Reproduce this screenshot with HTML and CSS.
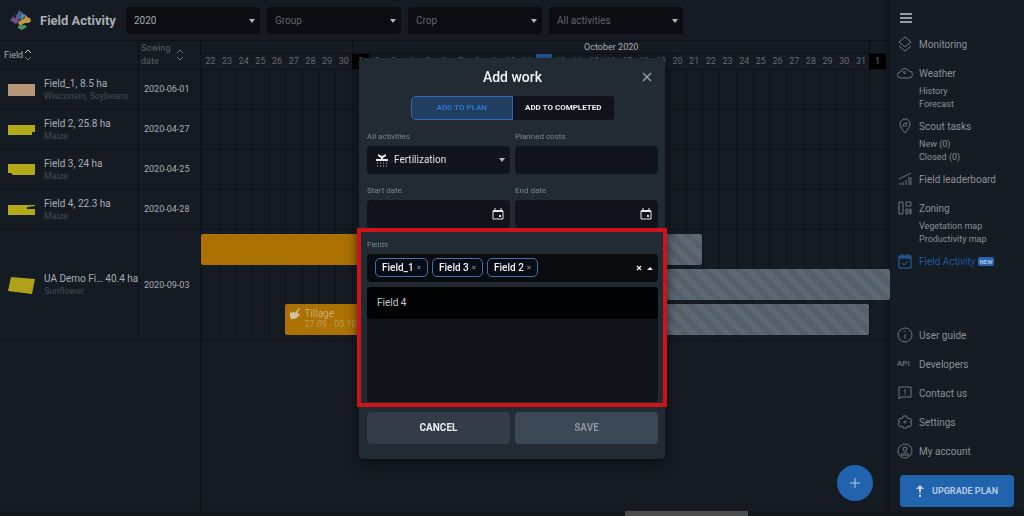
FILE: index.html
```html
<!DOCTYPE html>
<html lang="en">
<head>
    <meta charset="UTF-8">
    <meta name="viewport" content="width=device-width, initial-scale=1.0">
    <title>Field Activity</title>
    <link rel="stylesheet" href="styles.css">
</head>
<body>

    <div class="app">
        <main class="main">

            <!-- Top bar with filters -->
            <header class="topbar">
                <svg class="logo" viewBox="0 0 22 22">
                    <path d="M0 11l4-4v3l3-3 2 5-3 3z" fill="#71528f"/>
                    <path d="M5 5l2 1 2-5 2 2-1 8-3-2z" fill="#4f5f9c"/>
                    <path d="M12 2l1 3 3 1-4 5-2-2z" fill="#5487a0"/>
                    <path d="M8 14c2-3 4-4 6-4l2-4 1 2 3 1 1 3c-1 2-3 2-6 2l-5 3z" fill="#b99a45"/>
                    <path d="M8 17l7-1 2 2-5 3-4-2z" fill="#4f9468"/>
                </svg>
                <h1>Field Activity</h1>
                <div class="filters">
                    <div class="select">
                        <select class="chosen" aria-label="Year"><option>2020</option></select>
                    </div>
                    <div class="select">
                        <select aria-label="Group"><option>Group</option></select>
                    </div>
                    <div class="select">
                        <select aria-label="Crop"><option>Crop</option></select>
                    </div>
                    <div class="select">
                        <select aria-label="All activities"><option>All activities</option></select>
                    </div>
                </div>
            </header>

            <!-- Fields and timeline -->
            <table class="schedule">
                <colgroup>
                    <col class="col-field">
                    <col class="col-date">
                    <col>
                </colgroup>
                <thead>
                    <tr>
                        <th class="head-field" scope="col">
                            <div class="head">Field
                                <svg class="sort" viewBox="0 0 8 12"><path d="M1 4l3-3 3 3" stroke="#c4c8cc"/><path d="M1 8l3 3 3-3"/></svg>
                            </div>
                        </th>
                        <th class="head-date" scope="col">
                            <div class="head"><span>Sowing date</span>
                                <svg class="sort" viewBox="0 0 8 12"><path d="M1 4l3-3 3 3"/><path d="M1 8l3 3 3-3"/></svg>
                            </div>
                        </th>
                        <th class="head-time" scope="col">
                            <div class="months">
                                <span class="october">October 2020</span>
                                <span class="november"></span>
                            </div>
                            <div class="days" id="days"></div>
                        </th>
                    </tr>
                </thead>
                <tbody>
                    <tr>
                        <td>
                            <div class="field">
                                <svg viewBox="0 0 28 20"><path d="M1 4h27v12H1z" fill="#b8967a"/></svg>
                                <div><p>Field_1, 8.5 ha</p><small>Wisconsin, Soybeans</small></div>
                            </div>
                        </td>
                        <td class="date">2020-06-01</td>
                        <td class="track"></td>
                    </tr>
                    <tr>
                        <td>
                            <div class="field">
                                <svg viewBox="0 0 28 20"><path d="M1 5h27v7h-3v3H1z" fill="#b3aa17"/></svg>
                                <div><p>Field 2, 25.8 ha</p><small>Maize</small></div>
                            </div>
                        </td>
                        <td class="date">2020-04-27</td>
                        <td class="track"></td>
                    </tr>
                    <tr>
                        <td>
                            <div class="field">
                                <svg viewBox="0 0 28 20"><path d="M1 4h27v10l-1 1H6l-2-2H1z" fill="#b3aa17"/></svg>
                                <div><p>Field 3, 24 ha</p><small>Maize</small></div>
                            </div>
                        </td>
                        <td class="date">2020-04-25</td>
                        <td class="track"></td>
                    </tr>
                    <tr>
                        <td>
                            <div class="field">
                                <svg viewBox="0 0 28 20"><path d="M1 5h27v1l-8 1v2h8v6H1z" fill="#b3aa17"/></svg>
                                <div><p>Field 4, 22.3 ha</p><small>Maize</small></div>
                            </div>
                        </td>
                        <td class="date">2020-04-28</td>
                        <td class="track"></td>
                    </tr>
                    <tr>
                        <td>
                            <div class="field">
                                <svg viewBox="0 0 28 20"><path d="M4 2l24 2-3 15L1 16z" fill="#b0a01a"/></svg>
                                <div><p>UA Demo Fi… 40.4 ha</p><small>Sunflower</small></div>
                            </div>
                        </td>
                        <td class="date">2020-09-03</td>
                        <td class="track">
                            <div class="bars">
                                <div class="bar done bar-first"></div>
                                <div class="bar planned bar-first-rest"></div>
                                <div class="bar planned bar-second"></div>
                                <div class="bar done bar-tillage">
                                    <svg viewBox="0 0 12 12"><path d="M1 5l2 1 1-2 2 2 4-5 1 1-3 4 3 1-2 3-4 2H2L1 9z" fill="#cfc4a8"/></svg>
                                    <div><p>Tillage</p><small>27.09 - 05.10</small></div>
                                </div>
                                <div class="bar planned bar-tillage-rest"></div>
                            </div>
                        </td>
                    </tr>
                </tbody>
            </table>

            <div class="below"></div>

            <button class="fab" aria-label="Add">
                <svg viewBox="0 0 12 12"><path d="M6 1v10M1 6h10" stroke="#b9cbe2"/></svg>
            </button>
        </main>

        <!-- Right menu -->
        <aside class="sidebar">
            <button class="burger" aria-label="Menu">
                <svg viewBox="0 0 12 10"><path d="M0 1h12M0 5h12M0 9h12" stroke="#979ca2" stroke-width="2"/></svg>
            </button>
            <nav>
                <ul class="menu">
                    <li><a class="item" href="#"><svg viewBox="0 0 16 16"><path d="M8 1l6 5-6 5-6-5zM2 10l6 5 6-5"/></svg>Monitoring</a></li>
                    <li class="has-sub">
                        <a class="item" href="#"><svg viewBox="0 0 16 16"><path d="M4 13a3 3 0 0 1-1-6 5 5 0 0 1 9-1 3 3 0 0 1 0 7zM5 6l3 3V6"/></svg>Weather</a>
                        <ul class="sub">
                            <li><a href="#">History</a></li>
                            <li><a href="#">Forecast</a></li>
                        </ul>
                    </li>
                    <li class="has-sub">
                        <a class="item" href="#"><svg viewBox="0 0 16 16"><path d="M8 15C5 11 3 9 3 6a5 5 0 0 1 10 0c0 3-2 5-5 9zM6 9c0-3 1-4 4-4 0 2-1 4-3 3"/></svg>Scout tasks</a>
                        <ul class="sub">
                            <li><a href="#">New (0)</a></li>
                            <li><a href="#">Closed (0)</a></li>
                        </ul>
                    </li>
                    <li><a class="item" href="#"><svg viewBox="0 0 16 16"><path d="M2 8l12-6M3 14v-2M6 14v-3M9 14V9M12 14V6M14 14V6"/></svg>Field leaderboard</a></li>
                    <li class="has-sub">
                        <a class="item" href="#"><svg viewBox="0 0 16 16"><path d="M2 2h4v12H2zM9 2h5v4H9zM9 9h2v5H9zM13 9h1v5h-1z"/></svg>Zoning</a>
                        <ul class="sub">
                            <li><a href="#">Vegetation map</a></li>
                            <li><a href="#">Productivity map</a></li>
                        </ul>
                    </li>
                    <li><a class="item active" href="#"><svg viewBox="0 0 16 16"><path d="M2 3h12v12H2zM2 4h12M2 5h12M5 1v2M11 1v2M5 10l2 2 4-4"/></svg>Field Activity<span class="new">NEW</span></a></li>
                </ul>
            </nav>
            <ul class="menu bottom">
                <li><a class="item" href="#"><svg viewBox="0 0 16 16"><circle cx="8" cy="8" r="7"/><path d="M8 4v1M8 7v5"/></svg>User guide</a></li>
                <li><a class="item" href="#"><span class="api">API</span>Developers</a></li>
                <li><a class="item" href="#"><svg viewBox="0 0 16 16"><path d="M2 2h12v10H4l-2 2zM8 4v4M8 9v1"/></svg>Contact us</a></li>
                <li><a class="item" href="#"><svg viewBox="0 0 16 16"><path d="M6 2h4v2l2 1 1-1 2 3-2 1 2 2-2 3-2-1-1 1v1H6v-1l-1-1-2 1-2-3 2-2-2-1 2-3 1 1 2-1z"/><circle cx="8" cy="8" r="1"/></svg>Settings</a></li>
                <li><a class="item" href="#"><svg viewBox="0 0 16 16"><circle cx="8" cy="8" r="7"/><circle cx="8" cy="6" r="2"/><path d="M4 12c1-3 7-3 8 0z"/></svg>My account</a></li>
            </ul>
            <button class="upgrade">
                <svg viewBox="0 0 8 12"><path d="M4 0l4 4H5v3H3V4H0zM3 8h2v1H3zM3 10h2v2H3z" fill="#c3d3e8"/></svg>
                UPGRADE PLAN
            </button>
        </aside>
    </div>

    <!-- Horizontal scroll strip -->
    <div class="scroll"><div class="thumb"></div></div>

    <!-- Add work dialog -->
    <div class="overlay">
        <form class="modal" role="dialog" aria-labelledby="modal-title">
            <h2 id="modal-title">Add work</h2>
            <button class="close" type="button" aria-label="Close">
                <svg viewBox="0 0 10 10"><path d="M1 1l8 8M9 1l-8 8" stroke="#9aa3ad" stroke-width="1.4"/></svg>
            </button>

            <div class="tabs">
                <button class="tab selected" type="button">ADD TO PLAN</button>
                <button class="tab" type="button">ADD TO COMPLETED</button>
            </div>

            <div class="row">
                <div class="group">
                    <label for="activity">All activities</label>
                    <div class="select box">
                        <svg class="spreader" viewBox="0 0 12 14"><path d="M2 1l4 2 4-2v2L7 5v1h5v2H0V6h5V5L2 3z" fill="#e6e8ea"/><path d="M1 10h10M1 13h10" stroke="#b5b8bc" stroke-dasharray="1 2"/></svg>
                        <select id="activity"><option>Fertilization</option></select>
                    </div>
                </div>
                <div class="group">
                    <label for="costs">Planned costs</label>
                    <div class="box"><input type="text" id="costs"></div>
                </div>
            </div>

            <div class="row">
                <div class="group">
                    <label for="start">Start date</label>
                    <div class="box">
                        <input type="text" id="start">
                        <button class="calendar" type="button" aria-label="Pick start date">
                            <svg viewBox="0 0 12 12"><path d="M1 3h10v8H1zM3 0v2M9 0v2"/><path d="M1 3h10M7 8h2" stroke-width="2"/></svg>
                        </button>
                    </div>
                </div>
                <div class="group">
                    <label for="end">End date</label>
                    <div class="box">
                        <input type="text" id="end">
                        <button class="calendar" type="button" aria-label="Pick end date">
                            <svg viewBox="0 0 12 12"><path d="M1 3h10v8H1zM3 0v2M9 0v2"/><path d="M1 3h10M7 8h2" stroke-width="2"/></svg>
                        </button>
                    </div>
                </div>
            </div>

            <div class="fields">
                <label for="fields">Fields</label>
                <div class="box multi">
                    <span class="chip">Field_1<button type="button" aria-label="Remove Field_1">×</button></span>
                    <span class="chip">Field 3<button type="button" aria-label="Remove Field 3">×</button></span>
                    <span class="chip">Field 2<button type="button" aria-label="Remove Field 2">×</button></span>
                    <input type="text" id="fields">
                    <button class="clear" type="button" aria-label="Clear">
                        <svg viewBox="0 0 6 6"><path d="M1 1l4 4M5 1L1 5" stroke="#e6e8ea" stroke-width="1.4"/></svg>
                    </button>
                    <span class="caret-up"></span>
                </div>
                <div class="notes">
                    <textarea aria-label="Notes"></textarea>
                    <ul class="options"><li>Field 4</li></ul>
                </div>
            </div>

            <div class="row actions">
                <button class="cancel" type="button">CANCEL</button>
                <button class="save" type="submit">SAVE</button>
            </div>
        </form>
    </div>

    <script src="script.js"></script>
</body>
</html>
```

FILE: styles.css
```css
* {
    box-sizing: border-box;
}

body {
    margin: 0;
    height: 100vh;
    display: flex;
    flex-direction: column;
    overflow: hidden;
    background: #151b23;
    color: #a9adb2;
    font-family: Roboto, "Liberation Sans", sans-serif;
    font-size: 10px;
    line-height: 13px;
}

h1, h2, p, ul {
    margin: 0;
    padding: 0;
}

ul {
    list-style: none;
}

a {
    color: inherit;
    text-decoration: none;
}

button, input, select, textarea {
    font: inherit;
    color: inherit;
    border: none;
    background: none;
    padding: 0;
    margin: 0;
    outline: none;
}

button {
    cursor: pointer;
}

svg {
    display: block;
    flex: none;
    fill: none;
}

.app {
    display: flex;
    flex: 1;
    min-height: 0;
}

.main {
    position: relative;
    display: flex;
    flex-direction: column;
    flex: 1;
    min-width: 0;
}

/* Top bar */
.topbar {
    display: flex;
    align-items: center;
    height: 40px;
    padding-left: 10px;
}

.logo {
    width: 22px;
    height: 22px;
}

h1 {
    width: 86px;
    margin-left: 8px;
    font-size: 13px;
    font-weight: 700;
    color: #a9adb2;
    white-space: nowrap;
}

.filters {
    display: flex;
    gap: 7px;
}

.select {
    position: relative;
}

.select select {
    appearance: none;
    width: 134px;
    height: 27px;
    padding: 0 20px 0 8px;
    border-radius: 4px;
    background: #0b0d13;
    color: #60656b;
}

.select .chosen {
    color: #a4a8ac;
}

.select::after {
    content: "";
    position: absolute;
    top: 12px;
    right: 5px;
    border: 3px solid transparent;
    border-top: 4px solid #b4b7ba;
    border-bottom: none;
    pointer-events: none;
}

/* Schedule table */
.schedule {
    width: 100%;
    table-layout: fixed;
    border-collapse: separate;
    border-spacing: 0;
}

.col-field {
    width: 138px;
}

.col-date {
    width: 62px;
}

th, td {
    height: 40px;
    padding: 0;
    border-bottom: 1px solid #0e1218;
    text-align: left;
    font-weight: 400;
}

th {
    height: 30px;
    border-top: 1px solid #0e1218;
    font-size: 9px;
}

th + th, td + td {
    border-left: 1px solid #0e1218;
}

.head {
    display: flex;
    align-items: center;
    padding-left: 4px;
}

.head-date .head {
    justify-content: space-between;
    padding: 0 16px 0 2px;
    color: #5b6066;
}

.head-date span {
    width: 32px;
}

.sort {
    width: 8px;
    height: 12px;
    margin-left: 1px;
    stroke: #6d7278;
}

.months, .days, .bars {
    display: grid;
    grid-template-columns: 1px repeat(41, minmax(0, 1fr)) 4px;
}

.months {
    height: 13px;
    border-bottom: 1px solid #0e1218;
    line-height: 12px;
    text-align: center;
}

.october {
    grid-column: 11 / 42;
    border-left: 1px solid #0e1218;
}

.november {
    grid-column: 42;
    border-left: 1px solid #0e1218;
}

.days {
    height: 15px;
    line-height: 15px;
    text-align: center;
    color: #656a70;
}

.days span:first-child {
    grid-column-start: 2;
}

.days .month-start {
    background: #000;
}

.days .today {
    background: #2058a0;
}

.field {
    display: flex;
    align-items: center;
    gap: 9px;
    padding-left: 7px;
    white-space: nowrap;
}

.field svg {
    width: 28px;
    height: 20px;
}

small {
    display: block;
    font-size: 9px;
    color: #464b52;
}

.date {
    padding-left: 5px;
    font-size: 9px;
}

.track {
    vertical-align: top;
    background: repeating-linear-gradient(90deg, #10141a 0, #10141a 1px, transparent 1px, transparent calc(100% / 41)) 1px 0 / calc(100% - 5px) 100% no-repeat;
}

.bars {
    grid-template-rows: repeat(3, 31px);
    row-gap: 4px;
    padding: 4px 0 5px;
}

.bar {
    display: flex;
    gap: 3px;
    padding: 3px 4px;
    border-radius: 2px;
}

.done {
    background: #ac7103;
    color: #c9ad78;
    white-space: nowrap;
}

.done small {
    line-height: 9px;
    color: #c09a55;
}

.done svg {
    width: 12px;
    height: 12px;
}

.planned {
    background: repeating-linear-gradient(45deg, #5d6873 0, #5d6873 6px, #54606c 6px, #54606c 12px);
}

.bar-first {
    grid-area: 1 / 1 / 2 / 22;
}

.bar-first-rest {
    grid-area: 1 / 22 / 2 / 32;
}

.bar-second {
    grid-area: 2 / 22 / 3 / 44;
}

.bar-tillage {
    grid-area: 3 / 7 / 4 / 16;
}

.bar-tillage-rest {
    grid-area: 3 / 16 / 4 / 42;
}

/* keeps the timeline edge running under the last row */
.below {
    flex: 1;
    margin-left: 200px;
    border-left: 1px solid #0e1218;
}

.fab {
    position: absolute;
    right: 17px;
    bottom: 10px;
    display: grid;
    place-items: center;
    width: 36px;
    height: 36px;
    border-radius: 50%;
    background: #2263ae;
}

.fab svg {
    width: 12px;
    height: 12px;
}

/* Right menu */
.sidebar {
    display: flex;
    flex-direction: column;
    width: 134px;
    padding: 13px 10px 4px;
    background: #151c24;
    box-shadow: 0 0 5px #0b0e13;
    color: #8b9097;
}

.burger {
    align-self: flex-start;
    margin-bottom: 11px;
}

.burger svg {
    width: 12px;
    height: 10px;
}

.menu > li {
    margin-bottom: 9px;
}

.menu > .has-sub {
    margin-bottom: 5px;
}

.item {
    display: flex;
    align-items: center;
    height: 20px;
    margin-left: -3px;
    white-space: nowrap;
}

.item svg, .api {
    width: 16px;
    height: 16px;
    margin-right: 6px;
    stroke: #6e757d;
}

.api {
    font-size: 8px;
    line-height: 16px;
    font-weight: 500;
    color: #6e757d;
}

.sub {
    padding: 2px 0 0 19px;
    font-size: 9px;
}

.active {
    color: #22589b;
}

.item.active svg {
    stroke: #2866b0;
}

.new {
    margin-left: 2px;
    padding: 0 2px;
    border-radius: 2px;
    background: #2866b0;
    color: #a9c3e4;
    font-size: 6px;
    line-height: 9px;
    font-weight: 700;
}

.bottom {
    margin-top: auto;
}

.upgrade {
    display: flex;
    align-items: center;
    justify-content: center;
    gap: 8px;
    height: 32px;
    margin-top: 5px;
    border-radius: 4px;
    background: #2263ae;
    color: #b4c8e2;
    font-size: 9px;
    font-weight: 700;
    white-space: nowrap;
}

.upgrade svg {
    width: 8px;
    height: 12px;
}

.scroll {
    height: 5px;
    background: #12161b;
}

.thumb {
    width: 12%;
    height: 5px;
    margin-left: 61%;
    background: #4c4c4d;
}

/* Dialog */
.overlay {
    position: fixed;
    inset: 0;
    display: grid;
    place-items: center;
}

.modal {
    position: relative;
    width: 306px;
    padding: 12px 7px 15px 8px;
    border-radius: 4px;
    background: #222a33;
    box-shadow: 0 4px 12px #0c0f14;
    color: #dfe2e5;
}

h2 {
    font-size: 14px;
    line-height: 14px;
    font-weight: 500;
    text-align: center;
    color: #f2f3f4;
}

.close {
    position: absolute;
    top: 14px;
    right: 13px;
}

.close svg {
    width: 10px;
    height: 10px;
}

.tabs {
    display: grid;
    grid-template-columns: 1fr 1fr;
    width: 203px;
    margin: 12px auto 10px;
    border-radius: 4px;
    overflow: hidden;
    background: #10131b;
}

.tab {
    height: 24px;
    font-size: 8px;
    font-weight: 700;
    color: #f0f0f2;
    white-space: nowrap;
}

.selected {
    border: 1px solid #2e69b0;
    border-radius: 4px 0 0 4px;
    background: #213d60;
    color: #2c76cf;
}

.row {
    display: grid;
    grid-template-columns: repeat(2, minmax(0, 1fr));
    gap: 5px;
}

.group {
    margin-bottom: 10px;
}

label {
    display: block;
    height: 16px;
    font-size: 8px;
    line-height: 13px;
    color: #7e858d;
}

.box {
    display: flex;
    align-items: center;
    height: 28px;
    border-radius: 4px;
    background: #11141c;
}

.box input {
    flex: 1;
    min-width: 0;
    height: 28px;
    padding: 0 8px;
}

.box select {
    flex: 1;
    width: auto;
    background: none;
    color: #dfe2e5;
    padding-left: 6px;
}

.spreader {
    width: 12px;
    height: 14px;
    margin-left: 9px;
}

.calendar {
    margin-right: 6px;
}

.calendar svg {
    width: 12px;
    height: 12px;
    stroke: #e6e8ea;
}

/* Fields picker, marked with a red frame */
.fields {
    position: relative;
    margin-bottom: 10px;
}

.fields::before {
    content: "";
    position: absolute;
    inset: -10px -9px -5px -10px;
    border: 4px solid #d01318;
    pointer-events: none;
    z-index: 1;
}

.multi {
    gap: 4px;
    padding: 0 5px 0 8px;
    background: #090b0f;
}

.chip {
    display: flex;
    align-items: center;
    height: 19px;
    padding: 0 6px;
    border: 1px solid #4a70ab;
    border-radius: 5px;
    background: #060b16;
    font-weight: 500;
    color: #f0f1f3;
    white-space: nowrap;
}

.chip button {
    margin-left: 3px;
    font-size: 8px;
    color: #7f868f;
}

.clear svg {
    width: 6px;
    height: 6px;
}

.caret-up {
    margin: 2px 0 0 1px;
    border: 3px solid transparent;
    border-top: none;
    border-bottom: 3px solid #e6e8ea;
}

.notes {
    position: relative;
    margin-top: 5px;
}

.notes textarea {
    display: block;
    width: 100%;
    height: 115px;
    padding: 8px;
    border-radius: 4px;
    background: #11141b;
    resize: none;
}

.options {
    position: absolute;
    top: 0;
    left: 0;
    right: 0;
    padding: 0 10px;
    border-radius: 4px;
    background: #010203;
    line-height: 32px;
    color: #c4c7ca;
}

.actions button {
    height: 32px;
    border-radius: 4px;
    background: #343c4a;
    font-weight: 700;
    color: #eceef0;
}

.actions .save {
    background: #3a4754;
    color: #8d959e;
}
```

FILE: script.js
```js
// Day numbers in the timeline header: 22-30 September, October, 1 November
const days = document.getElementById('days');
const numbers = [];
for (let d = 22; d <= 30; d++) numbers.push(d);
for (let d = 1; d <= 31; d++) numbers.push(d);
numbers.push(1);

numbers.forEach(function(day, i) {
    const cell = document.createElement('span');
    cell.textContent = day;
    if (day === 1) cell.className = 'month-start';
    if (i === 20) cell.className = 'today';
    days.appendChild(cell);
});
```
